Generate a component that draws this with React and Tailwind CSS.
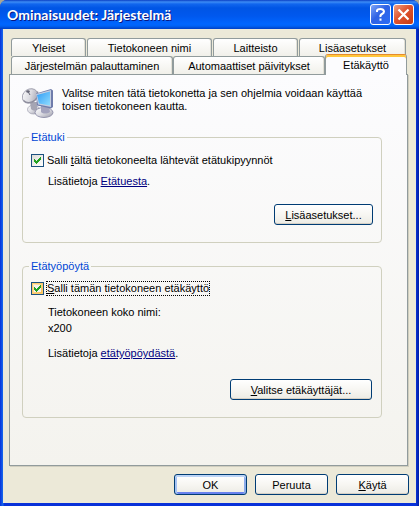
import { useState } from 'react';
import clsx from 'clsx';

const backTabs = [
    { id: 'general', label: 'Yleiset' },
    { id: 'name', label: 'Tietokoneen nimi' },
    { id: 'hardware', label: 'Laitteisto' },
    { id: 'advanced', label: 'Lisäasetukset' },
];

const frontTabs = [
    { id: 'restore', label: 'Järjestelmän palauttaminen' },
    { id: 'updates', label: 'Automaattiset päivitykset' },
    { id: 'remote', label: 'Etäkäyttö' },
];

function Tab({ tab, active, onSelect }) {
    return (
        <button
            type="button"
            role="tab"
            aria-selected={active}
            onClick={() => onSelect(tab.id)}
            className={clsx(
                'rounded-t-[3px] border border-b-0 border-[#919b9c] text-center whitespace-nowrap',
                active
                    ? 'relative z-10 -mt-[2px] -mb-px border-t-[#e68b2c] bg-[#fcfcfe] shadow-[inset_0_2px_0_#ffc73c]'
                    : 'bg-gradient-to-b from-white to-[#f1f0ea] pt-[2px] shadow-[inset_-1px_0_0_#e2e0d6]'
            )}
        >
            {tab.label}
        </button>
    );
}

function PushButton({ isDefault, className, children }) {
    return (
        <button
            type="button"
            className={clsx(
                'h-[21px] rounded-[3px] border border-[#003c74] bg-gradient-to-b from-white via-[#f7f6f2] to-[#ecebe4] pt-[2px] text-center whitespace-nowrap',
                isDefault
                    ? 'shadow-[inset_0_2px_0_#bcd4f6,inset_2px_0_0_#a6c3f3,inset_-2px_0_0_#8cacea,inset_0_-2px_0_#6982ee]'
                    : 'shadow-[inset_0_-1px_0_#d6d0c5]',
                className
            )}
        >
            {children}
        </button>
    );
}

function Group({ title, className, children }) {
    return (
        <fieldset className={clsx('flex min-w-0 flex-col rounded-[4px] border border-[#d0d0bf] pl-2', className)}>
            <legend className="ml-[-2px] px-[2px] leading-[13px] text-[#0046d5]">{title}</legend>
            {children}
        </fieldset>
    );
}

function CheckBox({ id, hot, focused, checked, onChange, children }) {
    return (
        <div className="flex items-center gap-[2px]">
            <span className="grid size-[13px] shrink-0">
                <input
                    id={id}
                    type="checkbox"
                    checked={checked}
                    onChange={onChange}
                    className={clsx(
                        'col-start-1 row-start-1 size-[13px] appearance-none border border-[#1c5180] bg-gradient-to-br',
                        hot
                            ? 'from-[#fff0cf] to-[#f8b330] shadow-[inset_0_0_0_1px_#fbcb6b]'
                            : 'from-[#dcdcd7] to-white'
                    )}
                />
                {hot && <span className="pointer-events-none col-start-1 row-start-1 m-[3px] bg-[#f3f3ef]" />}
                {checked && (
                    <svg viewBox="0 0 13 13" className="pointer-events-none col-start-1 row-start-1 size-[13px]" shapeRendering="crispEdges">
                        <path fill="#21a121" d="M3 5h1v1h1v1h1v-1h1v-1h1v-1h1v-1h1v3h-1v1h-1v1h-1v1h-1v1h-1v-1h-1v-1h-1z" />
                    </svg>
                )}
            </span>
            <label
                htmlFor={id}
                className={clsx('border border-dotted leading-[13px] whitespace-nowrap', focused ? 'border-black' : 'border-transparent')}
            >
                {children}
            </label>
        </div>
    );
}

function RemoteIcon() {
    return (
        <svg viewBox="0 0 32 32" className="size-8 shrink-0" aria-hidden="true">
            <defs>
                <linearGradient id="dish" x1="0" y1="0" x2="1" y2="1">
                    <stop offset="0" stopColor="#ffffff" />
                    <stop offset="0.5" stopColor="#dcdce2" />
                    <stop offset="1" stopColor="#9a9aa8" />
                </linearGradient>
                <linearGradient id="screen" x1="0" y1="0" x2="1" y2="1">
                    <stop offset="0" stopColor="#2f9bf5" />
                    <stop offset="1" stopColor="#8fdcff" />
                </linearGradient>
            </defs>
            <ellipse cx="11.500" cy="22.500" rx="6" ry="4.500" fill="url(#dish)" stroke="#9c9cac" strokeWidth=".7" />
            <path d="M8 15l7 0v8c-2 1-4 1-6-1z" fill="#a5a5b3" />
            <ellipse cx="8" cy="9" rx="8.200" ry="6.800" transform="rotate(-35 8 9)" fill="url(#dish)" stroke="#9494a4" strokeWidth=".8" />
            <path d="M1.500 13.500c3 3 8 2.500 11.500-.5 2.500-2.500 3.500-5.500 2.500-8.500" fill="none" stroke="#8b8b9b" strokeWidth="1.200" />
            <path d="M6 4.500l2 3.500" stroke="#666675" strokeWidth="1" />
            <ellipse cx="6" cy="4.500" rx="1.800" ry="1.300" fill="#666675" />
            <ellipse cx="22" cy="25.500" rx="9" ry="5" fill="url(#dish)" stroke="#8383a0" strokeWidth=".8" />
            <path d="M19 19l8 1 1 5c-3 2-7 2-9 0z" fill="#a3a3bd" />
            <path d="M14 6.500l15-4.500 2 1.500v16.500l-2 1.500-14-3z" fill="#6f7cab" />
            <path d="M14 7l15-4v17l-13-2.500z" fill="#c3cde0" />
            <path d="M15 8l13-3.500v14l-11-2z" fill="url(#screen)" />
        </svg>
    );
}

export default function App() {
    const [tab, setTab] = useState('remote');
    const [assistance, setAssistance] = useState(true);
    const [desktop, setDesktop] = useState(true);

    return (
        <div className="bg-[#a9a695]">
            <main className="flex min-h-screen flex-col rounded-t-[7px] bg-[linear-gradient(90deg,#0831d9_0,#166aee_3px,#0831d9_4px,#0831d9_calc(100%-3px),#001ea0_100%)] font-['Liberation_Sans',sans-serif] text-[11px] leading-[13px] text-black">
                <header className="flex h-[29px] items-center gap-[2px] rounded-t-[7px] bg-[linear-gradient(#0a3fc4_0,#3c8cf5_2px,#1166ee_4px,#0055e5_8px,#0058ee_16px,#0066ff_24px,#0062f5_26px,#0040c4_29px)] pr-[5px] pl-[7px]">
                    <h1 className="flex-1 font-[Lato,sans-serif] text-[14px] leading-[18px] font-bold whitespace-nowrap text-white [text-shadow:1px_1px_#0a1883]">
                        Ominaisuudet: Järjestelmä
                    </h1>
                    <button
                        type="button"
                        aria-label="Ohje"
                        className="grid size-[21px] place-items-center rounded-[3px] border border-white bg-[linear-gradient(135deg,#7ea6f8,#2f62e4_45%,#2a6cf6)]"
                    >
                        <svg viewBox="0 0 19 19" className="size-[19px]" fill="none" stroke="white" strokeWidth="2">
                            <path d="M6 7V5.500Q6.500 4 9.500 4T13 6.500Q13 8 11 9T9.500 12" />
                            <path d="M9.500 13.500v2.200" />
                        </svg>
                    </button>
                    <button
                        type="button"
                        aria-label="Sulje"
                        className="grid size-[21px] place-items-center rounded-[3px] border border-white bg-[linear-gradient(135deg,#f0a083,#df5430_45%,#c83a12)]"
                    >
                        <svg viewBox="0 0 19 19" className="size-[19px]" stroke="white" strokeWidth="2.200">
                            <path d="M4.500 4.500l10 10M14.500 4.500l-10 10" />
                        </svg>
                    </button>
                </header>

                <div className="mx-[3px] mb-[3px] flex flex-1 flex-col bg-[#ece9d8] pt-[9px] pr-[8px] pl-[6px]">
                    <div role="tablist" className="pr-px pl-[2px]">
                        <div className="mr-px grid h-[18px] grid-cols-[75fr_125fr_85fr_107fr] gap-px">
                            {backTabs.map((t) => (
                                <Tab key={t.id} tab={t} active={tab === t.id} onSelect={setTab} />
                            ))}
                        </div>
                        <div className="grid h-[18px] grid-cols-[162fr_152fr_82fr]">
                            {frontTabs.map((t) => (
                                <Tab key={t.id} tab={t} active={tab === t.id} onSelect={setTab} />
                            ))}
                        </div>
                    </div>

                    <section
                        role="tabpanel"
                        className="flex flex-1 flex-col border border-[#919b9c] bg-gradient-to-b from-[#fcfcfe] to-[#f4f3ee] pt-[12px] pr-[25px] pb-[46px] pl-[12px] shadow-[1px_1px_0_#d0cebf]"
                    >
                        <div className="flex gap-[8px]">
                            <RemoteIcon />
                            <p>
                                Valitse miten tätä tietokonetta ja sen ohjelmia voidaan käyttää
                                <br />
                                toisen tietokoneen kautta.
                            </p>
                        </div>

                        <Group title="Etätuki" className="mt-[12px] pr-[8px] pb-[17px]">
                            <div className="mt-[9px]">
                                <CheckBox id="assistance" checked={assistance} onChange={(e) => setAssistance(e.target.checked)}>
                                    Salli <u>t</u>ältä tietokoneelta lähtevät etätukipyynnöt
                                </CheckBox>
                            </div>
                            <p className="mt-[7px] ml-[17px]">
                                Lisätietoja <a href="#etatuki" className="text-[#000080] underline">Etätuesta</a>.
                            </p>
                            <PushButton className="mt-[16px] w-[99px] self-end">
                                <u>L</u>isäasetukset...
                            </PushButton>
                        </Group>

                        <Group title="Etätyöpöytä" className="mt-[17px] pr-[9px] pb-[17px]">
                            <div className="mt-[8px]">
                                <CheckBox id="desktop" hot focused checked={desktop} onChange={(e) => setDesktop(e.target.checked)}>
                                    <u>S</u>alli tämän tietokoneen etäkäyttö
                                </CheckBox>
                            </div>
                            <p className="mt-[8px] ml-[17px] leading-[16px]">
                                Tietokoneen koko nimi:
                                <br />
                                x200
                            </p>
                            <p className="mt-[11px] ml-[17px]">
                                Lisätietoja <a href="#etatyopoyta" className="text-[#000080] underline">etätyöpöydästä</a>.
                            </p>
                            <PushButton className="mt-[19px] w-[142px] self-end">
                                <u>V</u>alitse etäkäyttäjät...
                            </PushButton>
                        </Group>
                    </section>

                    <footer className="-mr-px flex justify-end gap-[8px] py-[8px]">
                        <PushButton isDefault className="w-[73px]">OK</PushButton>
                        <PushButton className="w-[73px]">Peruuta</PushButton>
                        <PushButton className="w-[73px]"><u>K</u>äytä</PushButton>
                    </footer>
                </div>
            </main>
        </div>
    );
}
